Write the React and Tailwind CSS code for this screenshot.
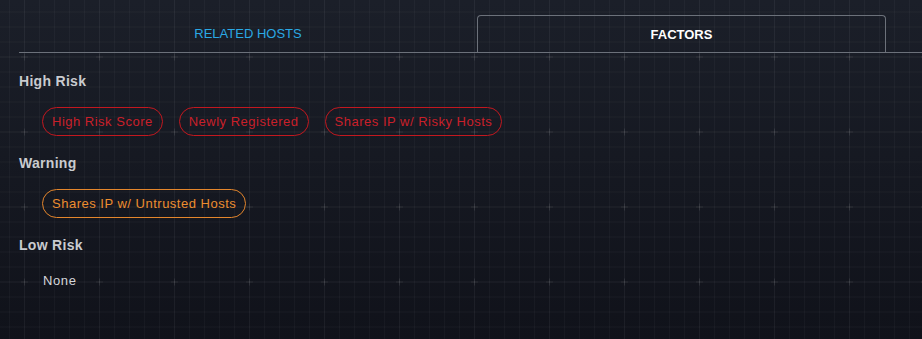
import React from 'react';

const factors = [
  {
    title: 'High Risk',
    tone: 'red',
    items: ['High Risk Score', 'Newly Registered', 'Shares IP w/ Risky Hosts'],
  },
  {
    title: 'Warning',
    tone: 'orange',
    items: ['Shares IP w/ Untrusted Hosts'],
  },
  {
    title: 'Low Risk',
    tone: 'none',
    items: [],
  },
];

const chipTone = {
  red: 'border-[#c3181f] text-[#c9202a]',
  orange: 'border-[#e4862c] text-[#ec8d2f]',
};

const GridBackdrop = () => (
  <svg className="pointer-events-none absolute inset-0 h-full w-full" aria-hidden="true">
    <defs>
      <pattern id="minor" width="15" height="15" x="9" y="11.5" patternUnits="userSpaceOnUse">
        <path d="M0.5 0V15M0 0.5H15" stroke="rgba(255,255,255,0.03)" strokeWidth="1" />
      </pattern>
      <pattern id="major" width="75" height="75" x="-13" y="19.5" patternUnits="userSpaceOnUse">
        <path d="M37.5 0V75M0 37.5H75" stroke="rgba(255,255,255,0.025)" strokeWidth="1" />
        <path d="M37.5 34V41M34 37.5H41" stroke="rgba(255,255,255,0.08)" strokeWidth="1" />
      </pattern>
    </defs>
    <rect width="100%" height="100%" fill="url(#minor)" />
    <rect width="100%" height="100%" fill="url(#major)" />
  </svg>
);

const App = () => {
  return (
    <div className="relative h-screen overflow-hidden bg-linear-to-b from-[#1b1f29] to-[#10121a] font-['Liberation_Sans',Arial,sans-serif]">
      <GridBackdrop />
      <div className="relative pl-[19px] pt-[15px]">
        <div className="flex h-[38px] border-b border-[#6c717a]">
          <button className="flex w-[458px] items-center justify-center text-[13px] text-[#2aa8e4]">
            RELATED HOSTS
          </button>
          <button className="-mb-px flex w-[409px] items-center justify-center rounded-t-[4px] border border-b-0 border-[#6c717a] text-[13px] font-bold text-white">
            FACTORS
          </button>
        </div>

        <div className="flex flex-col gap-[17px] pt-[18px]">
          {factors.map((group) => (
            <div key={group.title}>
              <h3 className="text-[14px] leading-5 font-bold tracking-[0.3px] text-[#c9cbcf]">{group.title}</h3>
              <div className="mt-4 flex gap-4 pl-[23px]">
                {group.items.length === 0 ? (
                  <span className="pl-px text-[13px] leading-5 tracking-[0.6px] text-[#d4d6da]">None</span>
                ) : (
                  group.items.map((item) => (
                    <span
                      key={item}
                      className={`flex h-[29px] items-center rounded-full border px-[9px] text-[13px] tracking-[0.5px] ${chipTone[group.tone]}`}
                    >
                      {item}
                    </span>
                  ))
                )}
              </div>
            </div>
          ))}
        </div>
      </div>
    </div>
  );
};

export default App;
